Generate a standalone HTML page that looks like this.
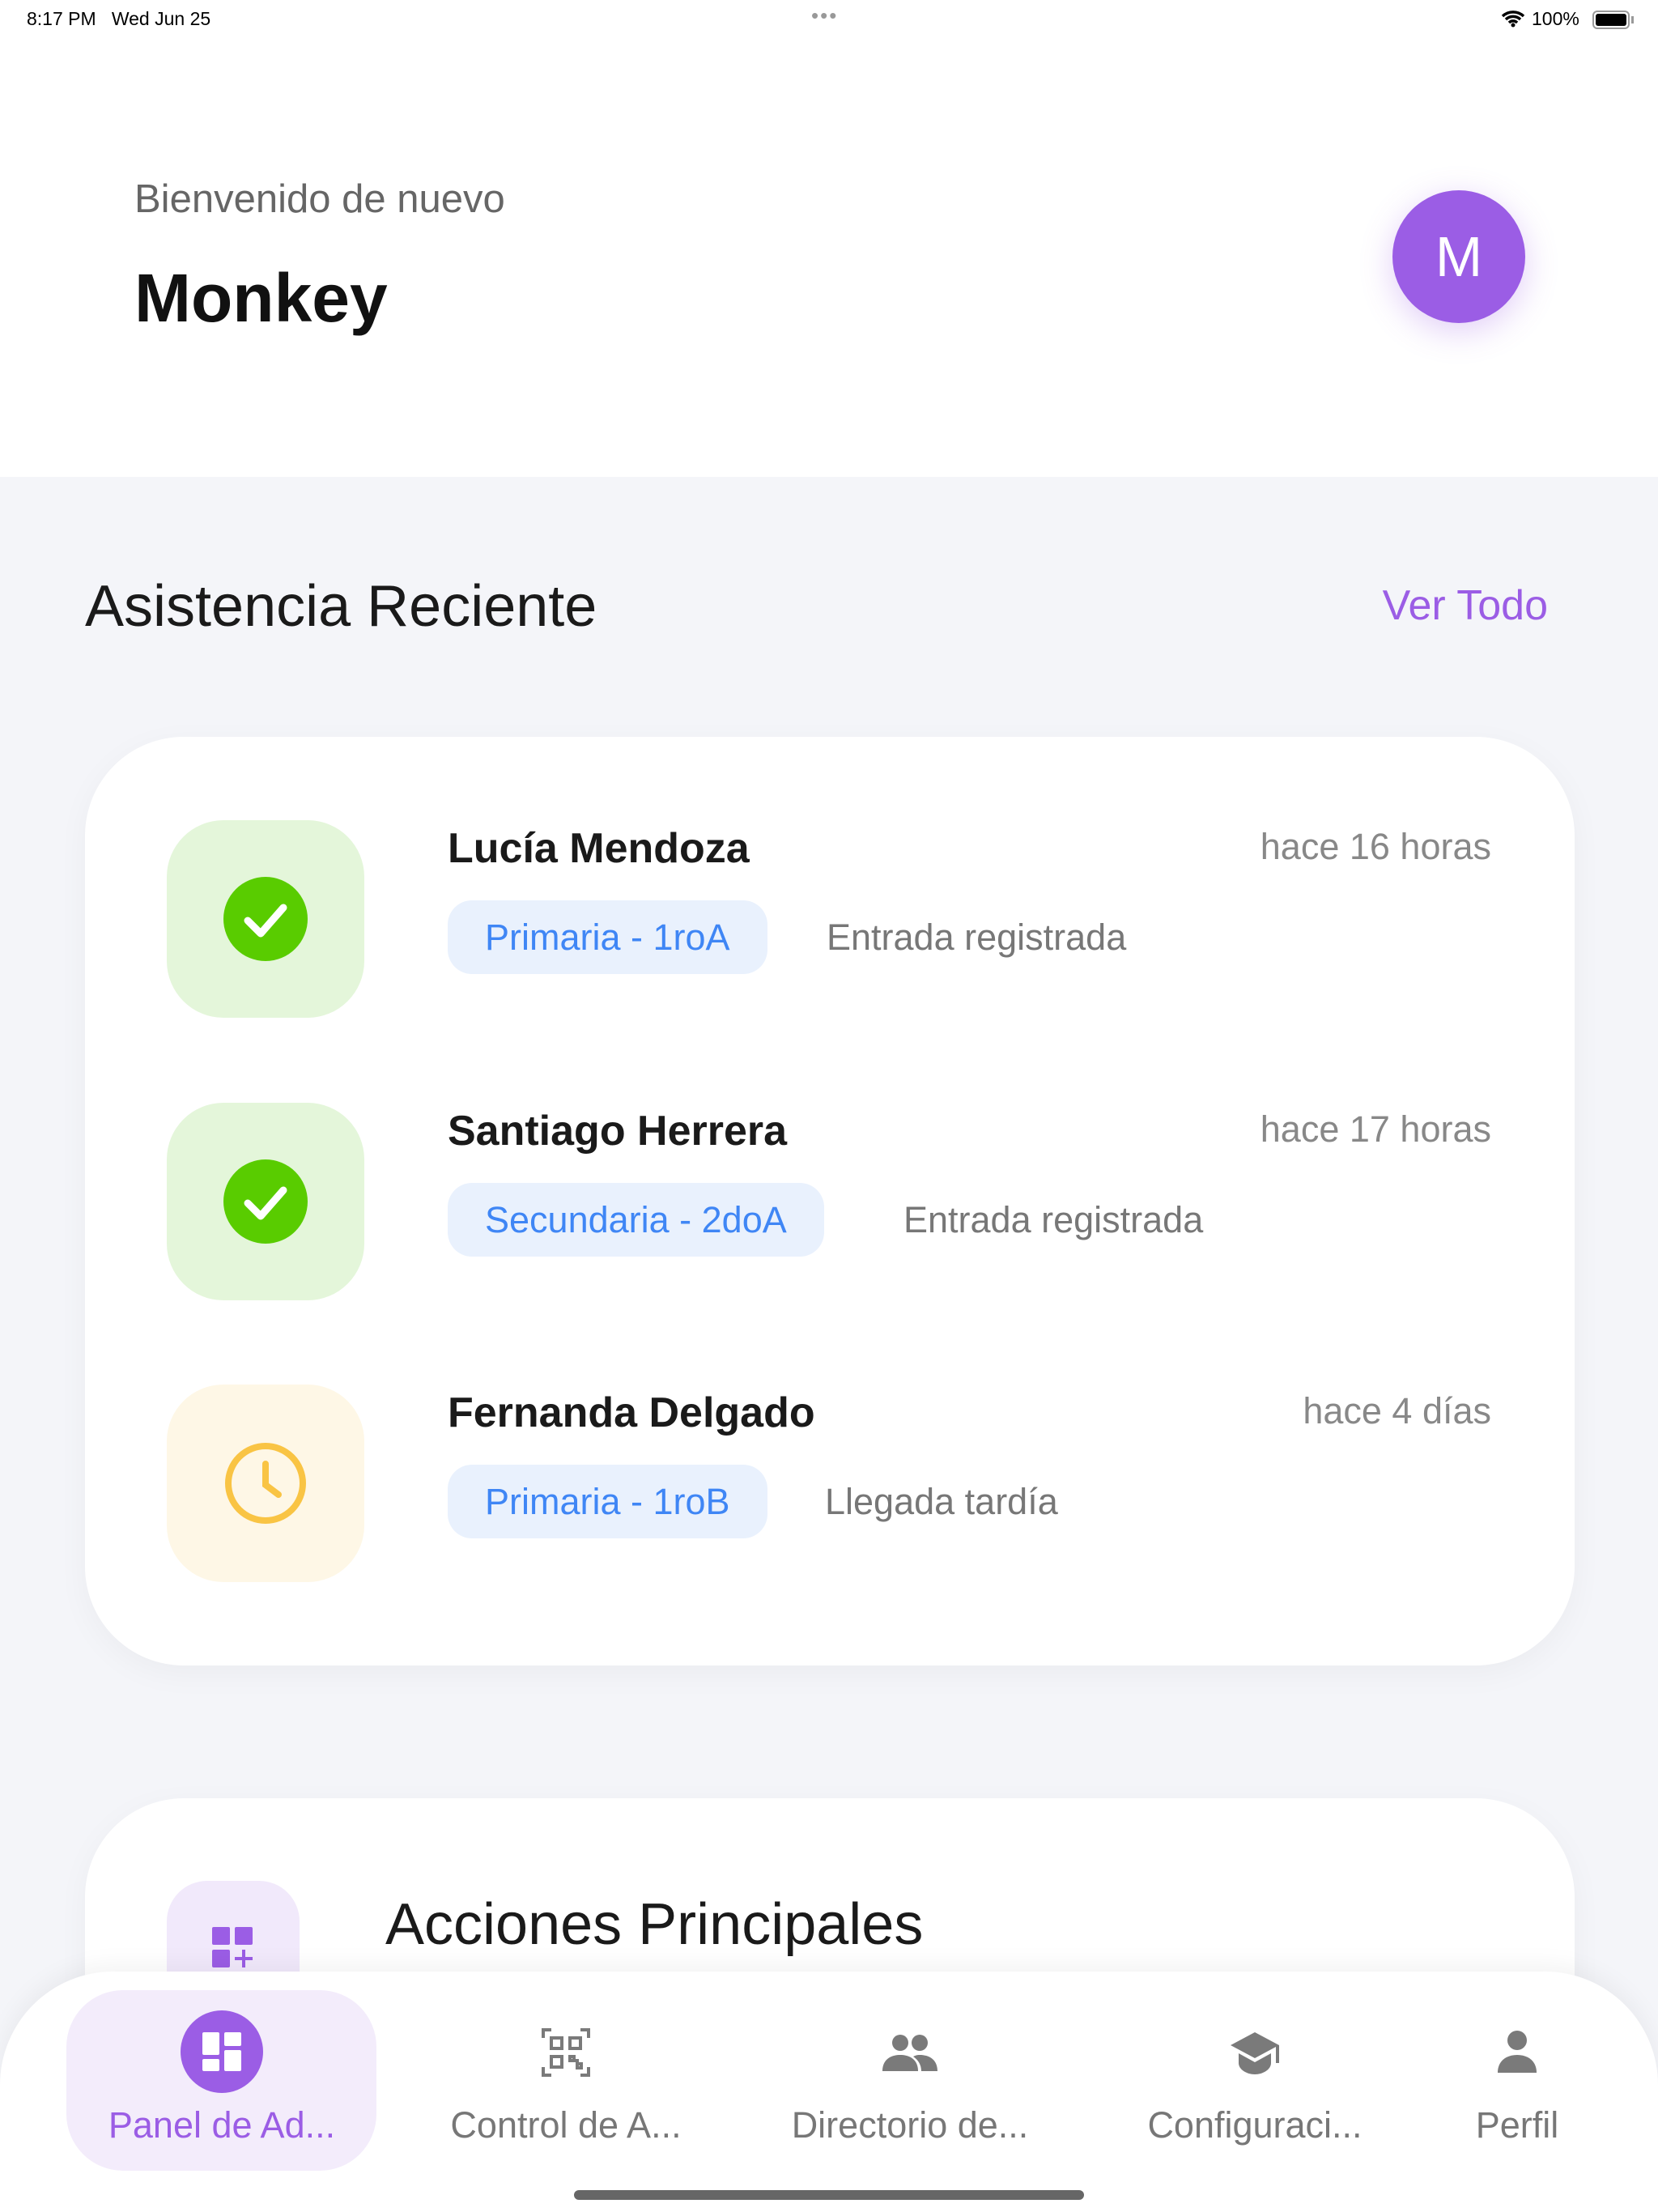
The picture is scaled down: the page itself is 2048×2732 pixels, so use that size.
<!DOCTYPE html>
<html style="width:2048px;height:2732px;overflow:hidden"><head><meta charset="utf-8"><style>
*{margin:0;padding:0;box-sizing:border-box}
body{width:2048px;height:2732px;position:relative;overflow:hidden;background:#f4f5f9;font-family:"Liberation Sans",sans-serif}
.a{position:absolute;white-space:nowrap}
.hdr{position:absolute;left:0;top:0;width:2048px;height:589px;background:#fff}
.card{position:absolute;left:105px;width:1840px;background:#fff;border-radius:122px;box-shadow:0 10px 40px rgba(0,0,0,0.04)}
.ib{position:absolute;left:206px;width:244px;height:244px;border-radius:70px}
.name{position:absolute;left:553px;font-size:52px;color:#1a1a1a;font-weight:600;line-height:60px}
.time{position:absolute;right:206px;font-size:45px;color:#888;line-height:60px}
.chip{position:absolute;left:553px;height:91px;border-radius:30px;background:#e9f1fd;color:#3f86f5;font-size:45px;line-height:91px;padding:0 46px}
.st{position:absolute;font-size:45px;color:#777;line-height:91px}
.nl{position:absolute;top:2595px;font-size:45px;color:#777;line-height:60px;transform:translateX(-50%)}
</style></head><body>
<div class="hdr"></div>
<div class="a" style="left:33px;top:10px;font-size:23px;color:#000">8:17 PM&nbsp;&nbsp;&nbsp;Wed Jun 25</div>
<div class="a" style="left:1002px;top:4px;font-size:26px;color:#999;letter-spacing:2px">•••</div>
<svg class="a" style="left:1854px;top:12px" width="30" height="22" viewBox="0 0 30 22"><path d="M2 8a19 19 0 0 1 26 0M6 12a13 13 0 0 1 18 0M10 16a7 7 0 0 1 10 0" stroke="#000" stroke-width="3.5" fill="none"/><circle cx="15" cy="19" r="2.5"/></svg>
<div class="a" style="left:1892px;top:10px;font-size:23px;color:#000">100%</div>
<div class="a" style="left:1967px;top:13px;width:46px;height:23px;border:2px solid #999;border-radius:6px;padding:2px"><div style="width:100%;height:100%;background:#000;border-radius:3px"></div></div>
<div class="a" style="left:2015px;top:20px;width:3px;height:9px;background:#999"></div>

<div class="a" style="left:166px;top:218px;font-size:49px;color:#666">Bienvenido de nuevo</div>
<div class="a" style="left:166px;top:320px;font-size:84px;color:#111;font-weight:bold">Monkey</div>
<div class="a" style="left:1720px;top:235px;width:164px;height:164px;border-radius:50%;background:#9b5de5;box-shadow:0 10px 40px rgba(155,93,229,0.3);color:#fff;font-size:70px;text-align:center;line-height:164px">M</div>

<div class="a" style="left:105px;top:708px;font-size:72px;color:#1a1a1a">Asistencia Reciente</div>
<div class="a" style="right:136px;top:718px;font-size:52px;color:#9b5de5">Ver Todo</div>

<div class="card" style="top:910px;height:1147px"></div>

<div class="ib" style="top:1013px;background:#e4f6da"></div>
<svg class="a" style="left:276px;top:1083px" width="104" height="104" viewBox="0 0 104 104"><circle cx="52" cy="52" r="52" fill="#59cc00"/><path d="M30 54l16 16 28-32" stroke="#fff" stroke-width="9" fill="none" stroke-linecap="round" stroke-linejoin="round"/></svg>
<div class="name" style="top:1018px">Lucía Mendoza</div>
<div class="time" style="top:1016px">hace 16 horas</div>
<div class="chip" style="top:1112px">Primaria - 1roA</div>
<div class="st" style="left:1021px;top:1112px">Entrada registrada</div>

<div class="ib" style="top:1362px;background:#e4f6da"></div>
<svg class="a" style="left:276px;top:1432px" width="104" height="104" viewBox="0 0 104 104"><circle cx="52" cy="52" r="52" fill="#59cc00"/><path d="M30 54l16 16 28-32" stroke="#fff" stroke-width="9" fill="none" stroke-linecap="round" stroke-linejoin="round"/></svg>
<div class="name" style="top:1367px">Santiago Herrera</div>
<div class="time" style="top:1365px">hace 17 horas</div>
<div class="chip" style="top:1461px">Secundaria - 2doA</div>
<div class="st" style="left:1116px;top:1461px">Entrada registrada</div>

<div class="ib" style="top:1710px;background:#fef7e6"></div>
<svg class="a" style="left:276px;top:1780px" width="104" height="104" viewBox="0 0 104 104"><circle cx="52" cy="52" r="46" fill="none" stroke="#f9c444" stroke-width="8"/><path d="M52 28v26l16 12" stroke="#f9c444" stroke-width="8" fill="none" stroke-linecap="round"/></svg>
<div class="name" style="top:1715px">Fernanda Delgado</div>
<div class="time" style="top:1713px">hace 4 días</div>
<div class="chip" style="top:1809px">Primaria - 1roB</div>
<div class="st" style="left:1019px;top:1809px">Llegada tardía</div>

<div class="card" style="top:2221px;height:500px"></div>
<div class="a" style="left:206px;top:2323px;width:164px;height:164px;border-radius:50px;background:#f1e9fb"></div>
<svg class="a" style="left:260px;top:2378px" width="56" height="56" viewBox="0 0 56 56" fill="#9b5de5"><rect x="2" y="2" width="22" height="22" rx="2"/><rect x="30" y="2" width="22" height="22" rx="2"/><rect x="2" y="30" width="22" height="22" rx="2"/><path d="M39 30h4v9h9v4h-9v9h-4v-9h-9v-4h9z"/></svg>
<div class="a" style="left:476px;top:2336px;font-size:72px;color:#1a1a1a">Acciones Principales</div>

<div class="a" style="left:0;top:2435px;width:2048px;height:297px;background:#fff;border-radius:140px 140px 0 0;box-shadow:0 -8px 30px rgba(0,0,0,0.05)"></div>
<div class="a" style="left:82px;top:2458px;width:383px;height:223px;border-radius:70px;background:#f3ecfb"></div>
<svg class="a" style="left:223px;top:2483px" width="102" height="102" viewBox="0 0 102 102"><circle cx="51" cy="51" r="51" fill="#9b5de5"/><g fill="#fff"><rect x="27" y="27" width="21" height="28" rx="2"/><rect x="54" y="27" width="21" height="17" rx="2"/><rect x="27" y="60" width="21" height="15" rx="2"/><rect x="54" y="49" width="21" height="26" rx="2"/></g></svg>
<div class="nl" style="left:274px;color:#9b5de5">Panel de Ad...</div>

<svg class="a" style="left:669px;top:2505px" width="60" height="60" viewBox="0 0 60 60" fill="none" stroke="#7a7a7a" stroke-width="4"><path d="M2 12V2h10M48 2h10v10M58 48v10H48M12 58H2V48"/><rect x="12" y="12" width="13" height="13"/><rect x="35" y="12" width="13" height="13"/><rect x="12" y="35" width="13" height="13"/><path d="M35 35h5v5h-5zM44 44h5v5h-5zM40 40h4v4"/></svg>
<div class="nl" style="left:699px">Control de A...</div>

<svg class="a" style="left:1090px;top:2512px" width="68" height="46" viewBox="0 0 68 46" fill="#7a7a7a"><circle cx="22" cy="11" r="10"/><circle cx="46" cy="11" r="10"/><path d="M0 46c0-14 10-20 22-20s22 6 22 20z"/><path d="M38 28c4-2 6-2 8-2 12 0 22 6 22 20H48c0-8-4-14-10-18z"/></svg>
<div class="nl" style="left:1124px">Directorio de...</div>

<svg class="a" style="left:1518px;top:2508px" width="64" height="56" viewBox="0 0 64 56" fill="#7a7a7a"><path d="M32 2L2 18l30 16 26-14v20h4V18z"/><path d="M12 28v12c0 8 10 14 20 14s20-6 20-14V28L32 39z"/></svg>
<div class="nl" style="left:1550px">Configuraci...</div>

<svg class="a" style="left:1850px;top:2508px" width="48" height="52" viewBox="0 0 48 52" fill="#7a7a7a"><circle cx="24" cy="12" r="12"/><path d="M0 52c0-14 10-22 24-22s24 8 24 22z"/></svg>
<div class="nl" style="left:1874px">Perfil</div>

<div class="a" style="left:709px;top:2705px;width:630px;height:12px;border-radius:6px;background:#666"></div>
</body></html>
